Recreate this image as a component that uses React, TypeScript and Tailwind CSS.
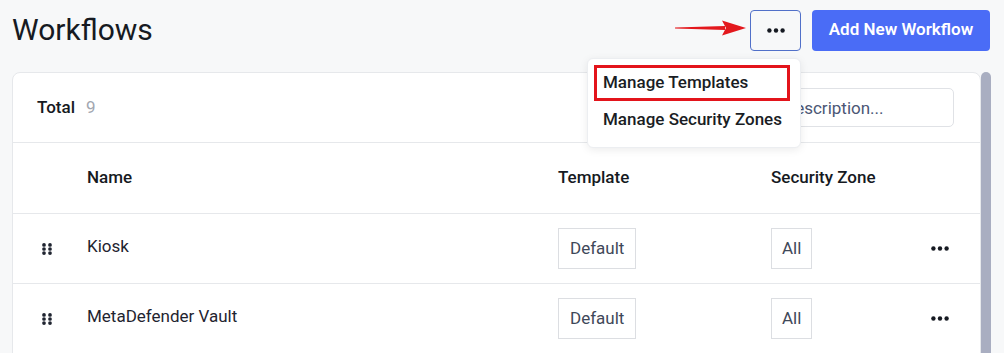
import { useState } from 'react';

type Workflow = {
  id: number;
  name: string;
  template: string;
  zone: string;
};

const workflows: Workflow[] = [
  { id: 1, name: 'Kiosk', template: 'Default', zone: 'All' },
  { id: 2, name: 'MetaDefender Vault', template: 'Default', zone: 'All' },
];

function Dots({ className = '' }: { className?: string }) {
  return (
    <svg width="18" height="5" viewBox="0 0 18 5" className={className} aria-hidden="true">
      <circle cx="2.4" cy="2.5" r="2.2" fill="currentColor" />
      <circle cx="9" cy="2.5" r="2.2" fill="currentColor" />
      <circle cx="15.6" cy="2.5" r="2.2" fill="currentColor" />
    </svg>
  );
}

function DragHandle() {
  return (
    <svg width="10" height="12" viewBox="0 0 10 12" className="text-[#1f2430]" aria-hidden="true">
      {[1.9, 6, 10.1].map(cy => (
        <g key={cy}>
          <circle cx="2" cy={cy} r="1.85" fill="currentColor" />
          <circle cx="8" cy={cy} r="1.85" fill="currentColor" />
        </g>
      ))}
    </svg>
  );
}

function RedArrow() {
  return (
    <svg width="72" height="18" viewBox="0 0 72 18" aria-hidden="true">
      {/* tapered shaft */}
      <polygon points="0,8.6 50,7 50,11 0,9.4" fill="#e3181d" />
      {/* head */}
      <polygon points="47,1.5 71,9 47,16.5 51,9" fill="#e3181d" />
    </svg>
  );
}

export default function App() {
  const [menuOpen] = useState(true);

  return (
    <div className="h-screen overflow-hidden bg-[#f7f8f9] pl-3 pr-[13px] font-['Roboto',_'Liberation_Sans',_sans-serif]">
      {/* Page header */}
      <div className="flex h-[60px] items-center justify-between pr-px">
        <h1 className="text-[30px] font-normal leading-none text-[#161a22]">Workflows</h1>

        <div className="flex items-center gap-[11px]">
          <div className="relative">
            <div className="absolute right-full top-1/2 mr-[3px] -translate-y-[11px]">
              <RedArrow />
            </div>
            <button className="flex h-[41px] w-[51px] items-center justify-center rounded-[4px] border border-[#5170c9] bg-[#f7f8f9] text-[#161a22]">
              <Dots />
            </button>

            {menuOpen && (
              <div className="absolute right-0 top-full z-10 mt-[7px] w-[214px] rounded-[6px] border border-[#eceef1] bg-white pb-[7px] pl-[6px] pr-[10px] pt-[6px] shadow-[0_2px_8px_rgba(0,0,0,0.08)]">
                <div className="flex h-[36px] items-center border-[3px] border-[#e3141b] pl-[6px] text-[17px] font-medium text-[#1a1d24]">
                  Manage Templates
                </div>
                <div className="flex h-[39px] items-center pl-[9px] text-[17px] font-medium text-[#1a1d24]">
                  Manage Security Zones
                </div>
              </div>
            )}
          </div>

          <button className="h-[41px] w-[178px] rounded-[4px] bg-[#4a6cf6] text-[17px] font-semibold text-white">
            Add New Workflow
          </button>
        </div>
      </div>

      {/* Card + scrollbar */}
      <div className="mt-3 flex">
        <div className="flex-1 rounded-t-lg border border-[#e6e8eb] bg-white">
          <div className="flex h-[70px] items-center justify-between border-b border-[#e6e8eb] pl-6 pr-[26px]">
            <div className="flex items-baseline gap-[11px] text-[17px]">
              <span className="font-medium text-[#161a22]">Total</span>
              <span className="text-[#a2a6b0]">9</span>
            </div>
            <input
              className="h-[39px] w-[326px] rounded-[5px] border border-[#e0e2e6] px-3 text-[17px] text-[#4b5675] outline-none placeholder:text-[#4b5675]"
              placeholder="Search by name or description..."
            />
          </div>

          <div className="grid h-[71px] grid-cols-[74px_471px_213px_1fr_80px] items-center border-b border-[#e6e8eb] text-[17px] font-medium text-[#161a22]">
            <div />
            <div>Name</div>
            <div>Template</div>
            <div>Security Zone</div>
            <div />
          </div>

          {workflows.map(wf => (
            <div
              key={wf.id}
              className="grid h-[70px] grid-cols-[74px_471px_213px_1fr_80px] items-center border-b border-[#e6e8eb] text-[17px]"
            >
              <div className="flex justify-start pl-[29px]">
                <DragHandle />
              </div>
              <div className="-mt-[3px] text-[#1f2430]">{wf.name}</div>
              <div>
                <span className="inline-flex h-[41px] items-center border border-[#dcdee2] px-[11px] text-[#3f4859]">
                  {wf.template}
                </span>
              </div>
              <div>
                <span className="inline-flex h-[41px] items-center border border-[#dcdee2] px-[10px] text-[#3f4859]">
                  {wf.zone}
                </span>
              </div>
              <div className="flex justify-start pl-[31px] text-[#161a22]">
                <Dots />
              </div>
            </div>
          ))}
        </div>

        <div className="w-[10px] rounded-t-full bg-[#a9aec1]" />
      </div>
    </div>
  );
}
